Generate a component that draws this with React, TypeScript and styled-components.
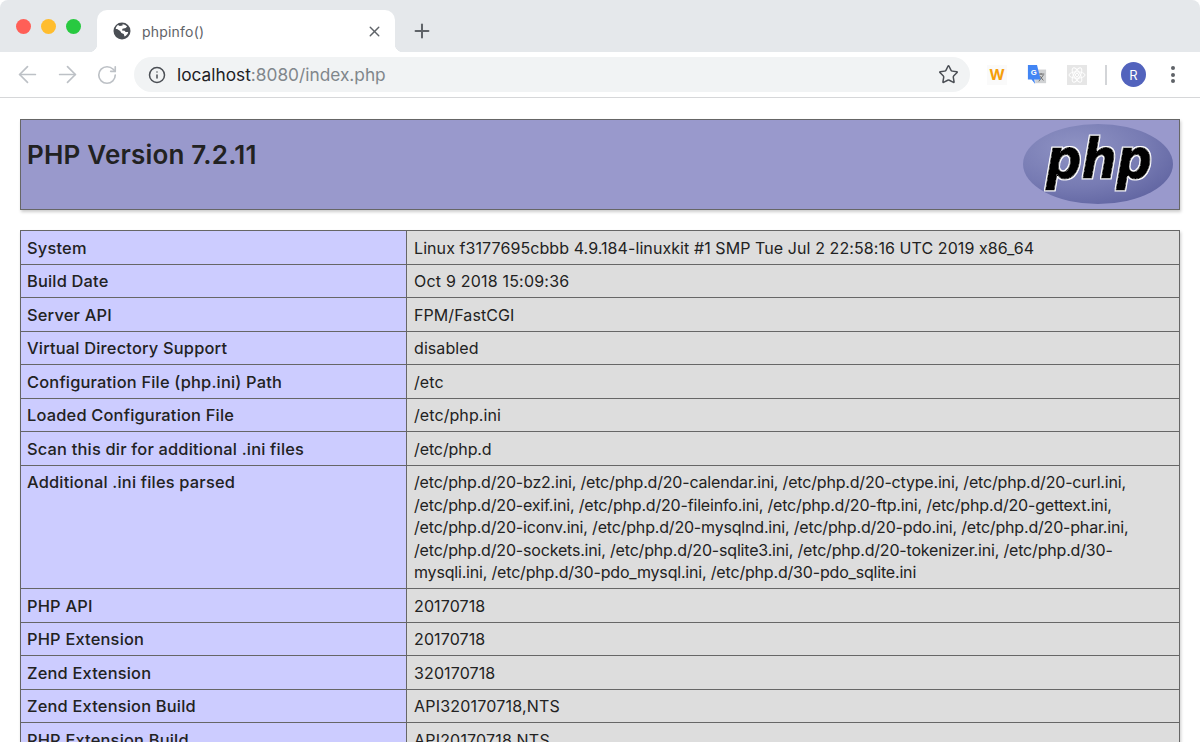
import React from "react";
import styled, { createGlobalStyle } from "styled-components";
import { ArrowLeft, ArrowRight, RotateCw, Info, Star, Plus, X } from "lucide-react";

const Global = createGlobalStyle`
  html, body { margin: 0; padding: 0; height: 742px; overflow: hidden; background: #fff; }
  #root { height: 742px; overflow: hidden; }
`;

const Window = styled.div`
  width: 1200px;
  height: 742px;
  overflow: hidden;
  font-family: Inter, "Liberation Sans", Arial, sans-serif;
  font-feature-settings: "calt" 0;
  background: #fff;
`;

const TabStrip = styled.div`
  height: 52px;
  background: #e5e8eb;
  border-radius: 8px 8px 0 0;
  display: flex;
  align-items: flex-end;
`;

const Lights = styled.div`
  width: 97px;
  height: 52px;
  padding: 19px 0 0 16px;
  box-sizing: border-box;
  display: flex;
  gap: 10px;
`;

const Light = styled.span<{ $c: string }>`
  width: 15px;
  height: 15px;
  border-radius: 50%;
  background: ${(p) => p.$c};
`;

const Tab = styled.div`
  position: relative;
  width: 298px;
  height: 42px;
  box-sizing: border-box;
  padding: 0 12px 0 16px;
  background: #fff;
  border-radius: 10px 10px 0 0;
  display: flex;
  align-items: center;
  color: #5f6368;
  &::before, &::after {
    content: "";
    position: absolute;
    bottom: 0;
    width: 8px;
    height: 8px;
  }
  &::before { left: -8px; background: radial-gradient(circle at 0 0, transparent 8px, #fff 8.5px); }
  &::after { right: -8px; background: radial-gradient(circle at 100% 0, transparent 8px, #fff 8.5px); }
`;

const TabTitle = styled.span`
  flex: 1;
  margin-left: 11px;
  font-size: 14px;
  letter-spacing: 0.2px;
  color: #5f6368;
`;

const NewTab = styled.div`
  height: 42px;
  margin-left: 16px;
  display: flex;
  align-items: center;
  color: #5f6368;
`;

const Toolbar = styled.div`
  height: 46px;
  box-sizing: border-box;
  border-bottom: 1px solid #d6d7d9;
  display: flex;
  align-items: center;
  padding: 0 18px 0 7px;
  background: #fff;
`;

const NavButton = styled.span`
  width: 40px;
  display: flex;
  justify-content: center;
  color: #bdc1c6;
`;

const Omnibox = styled.div`
  width: 836px;
  height: 35px;
  margin-left: 7px;
  box-sizing: border-box;
  padding: 0 11.5px 0 14px;
  border-radius: 18px;
  background: #f1f3f4;
  display: flex;
  align-items: center;
  color: #5f6368;
`;

const Url = styled.span`
  flex: 1;
  margin-left: 11px;
  font-size: 17.3px;
  color: #80868b;
`;

const Host = styled.span`
  color: #202124;
`;

const Extensions = styled.div`
  display: flex;
  align-items: center;
  margin-left: 17px;
  gap: 20px;
`;

const ExtBox = styled.span<{ $bg: string }>`
  width: 20px;
  height: 20px;
  display: flex;
  align-items: center;
  justify-content: center;
  background: ${(p) => p.$bg};
`;

const WMark = styled.span`
  font-size: 15px;
  font-weight: 700;
  color: #f59e0b;
`;

const Divider = styled.span`
  width: 1.5px;
  height: 20px;
  margin-left: -2px;
  background: #d3d5d8;
`;

const Avatar = styled.span`
  width: 25px;
  height: 25px;
  margin-left: -5.5px;
  border-radius: 50%;
  background: #5263bd;
  color: #fff;
  font-size: 13px;
  display: flex;
  align-items: center;
  justify-content: center;
`;

const Dots = styled.span`
  display: flex;
  flex-direction: column;
  gap: 2.5px;
  margin-left: 5px;
  i { width: 4px; height: 4px; border-radius: 50%; background: #5f6368; display: block; }
`;

const Page = styled.main`
  padding: 21px 20px 0;
  color: #222;
`;

const Banner = styled.header`
  height: 91px;
  box-sizing: border-box;
  border: 1px solid #666;
  background: #9999cc;
  box-shadow: 1px 2px 3px #ccc;
  padding: 4px 6px 0 6px;
  display: flex;
  justify-content: space-between;
  margin-bottom: 20px;
`;

const Title = styled.h1`
  margin: 15px 0 0;
  font-size: 26px;
  letter-spacing: 0.2px;
  line-height: 32px;
  font-weight: 600;
  color: #222;
`;

const InfoTable = styled.section`
  border: 1px solid #666;
  border-bottom: 0;
  box-shadow: 1px 2px 3px #ccc;
`;

const Row = styled.div`
  display: grid;
  grid-template-columns: 386px 1fr;
  border-bottom: 1px solid #666;
  font-size: 16px;
  line-height: 22.5px;
`;

const Label = styled.div`
  background: #ccccff;
  border-right: 1px solid #666;
  padding: 5.5px 6px 4.5px;
  font-size: 16.4px;
  letter-spacing: 0.2px;
  font-weight: 500;
  color: #222;
`;

const Value = styled.div<{ $spacing: number }>`
  background: #dddddd;
  padding: 5.5px 6.5px 4.5px 7px;
  letter-spacing: ${(p) => p.$spacing}px;
  color: #222;
`;

const rows: [string, string, number?][] = [
  ["System", "Linux f3177695cbbb 4.9.184-linuxkit #1 SMP Tue Jul 2 22:58:16 UTC 2019 x86_64"],
  ["Build Date", "Oct 9 2018 15:09:36", 0.2],
  ["Server API", "FPM/FastCGI"],
  ["Virtual Directory Support", "disabled"],
  ["Configuration File (php.ini) Path", "/etc"],
  ["Loaded Configuration File", "/etc/php.ini"],
  ["Scan this dir for additional .ini files", "/etc/php.d", -0.1],
  [
    "Additional .ini files parsed",
    "/etc/php.d/20-bz2.ini, /etc/php.d/20-calendar.ini, /etc/php.d/20-ctype.ini, /etc/php.d/20-curl.ini, /etc/php.d/20-exif.ini, /etc/php.d/20-fileinfo.ini, /etc/php.d/20-ftp.ini, /etc/php.d/20-gettext.ini, /etc/php.d/20-iconv.ini, /etc/php.d/20-mysqlnd.ini, /etc/php.d/20-pdo.ini, /etc/php.d/20-phar.ini, /etc/php.d/20-sockets.ini, /etc/php.d/20-sqlite3.ini, /etc/php.d/20-tokenizer.ini, /etc/php.d/30-mysqli.ini, /etc/php.d/30-pdo_mysql.ini, /etc/php.d/30-pdo_sqlite.ini",
    -0.18,
  ],
  ["PHP API", "20170718", 0.12],
  ["PHP Extension", "20170718", 0.12],
  ["Zend Extension", "320170718", 0.12],
  ["Zend Extension Build", "API320170718,NTS", 0.2],
  ["PHP Extension Build", "API20170718,NTS", 0.2],
];

const Globe = () => (
  <svg width="18" height="18" viewBox="0 0 18 18">
    <circle cx="9" cy="9" r="8.5" fill="#4a4e54" />
    <path d="M9.5 2.2c2 .1 3.6 1 4.6 2.3l-1.4 1.6-3.2.6-.5 1.7 2.6.4 1 1.3h2.5c.3.1-.6 3.4-3.6 4.5l-.7-2.6-2.4-.9-1.2-2.2-3.1-1.8-1.4 0c.2-1.6 1-3 2.3-4l1.8 1 2.8-.6z" fill="#fff" />
  </svg>
);

const PhpLogo = () => (
  <svg width="150" height="80" viewBox="0 0 150 80">
    <defs>
      <radialGradient id="eg" cx="35%" cy="30%" r="80%">
        <stop offset="0" stopColor="#8f93c4" />
        <stop offset="0.6" stopColor="#777bb3" />
        <stop offset="1" stopColor="#5f63a0" />
      </radialGradient>
      <filter id="halo" x="-10%" y="-10%" width="120%" height="120%">
        <feMorphology in="SourceAlpha" operator="dilate" radius="1" result="d" />
        <feFlood floodColor="#fff" />
        <feComposite in2="d" operator="in" result="w" />
        <feMerge>
          <feMergeNode in="w" />
          <feMergeNode in="SourceGraphic" />
        </feMerge>
      </filter>
    </defs>
    <ellipse cx="75" cy="40" rx="75" ry="40" fill="url(#eg)" />
    <text
      x="76"
      y="54"
      textAnchor="middle"
      fontFamily="DejaVu Sans, Liberation Sans, sans-serif"
      fontWeight="700"
      fontStyle="italic"
      fontSize="55"
      textLength="106"
      lengthAdjust="spacingAndGlyphs"
      fill="#000"
      stroke="#000"
      strokeWidth="1"
      filter="url(#halo)"
    >
      php
    </text>
  </svg>
);

const Translate = () => (
  <svg width="22" height="22" viewBox="0 0 22 22">
    <rect x="9" y="5" width="12" height="15" fill="#d0d2d4" />
    <path d="M12 10h7M15.5 9v1.5M13 18l5-7M14 12l4 5" stroke="#666" strokeWidth="1" fill="none" />
    <path d="M1 0h10l4 16H8l1 5-4-5H1z" fill="#4285f4" />
    <text x="4" y="10.5" fontFamily="Liberation Sans, Arial, sans-serif" fontWeight="700" fontSize="8.5" fill="#fff">G</text>
  </svg>
);

const Atom = () => (
  <svg width="18" height="18" viewBox="0 0 18 18" fill="none" stroke="#fff" strokeWidth="1">
    <ellipse cx="9" cy="9" rx="8" ry="3.2" />
    <ellipse cx="9" cy="9" rx="8" ry="3.2" transform="rotate(60 9 9)" />
    <ellipse cx="9" cy="9" rx="8" ry="3.2" transform="rotate(120 9 9)" />
    <circle cx="9" cy="9" r="1.6" />
  </svg>
);

export default function App() {
  return (
    <Window>
      <Global />
      <TabStrip>
        <Lights>
          <Light $c="#ff5f57" />
          <Light $c="#ffbd2e" />
          <Light $c="#28c940" />
        </Lights>
        <Tab>
          <Globe />
          <TabTitle>phpinfo()</TabTitle>
          <X size={17} strokeWidth={2} />
        </Tab>
        <NewTab>
          <Plus size={22} strokeWidth={2.2} />
        </NewTab>
      </TabStrip>
      <Toolbar>
        <NavButton><ArrowLeft size={27} strokeWidth={1.5} /></NavButton>
        <NavButton><ArrowRight size={27} strokeWidth={1.5} /></NavButton>
        <NavButton><RotateCw size={22} strokeWidth={1.8} /></NavButton>
        <Omnibox>
          <Info size={18} strokeWidth={2} color="#4a4e54" />
          <Url><Host>localhost</Host>:8080/index.php</Url>
          <Star size={21} strokeWidth={1.7} color="#4a4e54" />
        </Omnibox>
        <Extensions>
          <ExtBox $bg="#fafafa"><WMark>W</WMark></ExtBox>
          <ExtBox $bg="transparent"><Translate /></ExtBox>
          <ExtBox $bg="#e6e6e6"><Atom /></ExtBox>
          <Divider />
          <Avatar>R</Avatar>
          <Dots><i /><i /><i /></Dots>
        </Extensions>
      </Toolbar>
      <Page>
        <Banner>
          <Title>PHP Version 7.2.11</Title>
          <PhpLogo />
        </Banner>
        <InfoTable>
          {rows.map(([k, v, s]) => (
            <Row key={k}>
              <Label>{k}</Label>
              <Value $spacing={s ?? 0.08}>{v}</Value>
            </Row>
          ))}
        </InfoTable>
      </Page>
    </Window>
  );
}
